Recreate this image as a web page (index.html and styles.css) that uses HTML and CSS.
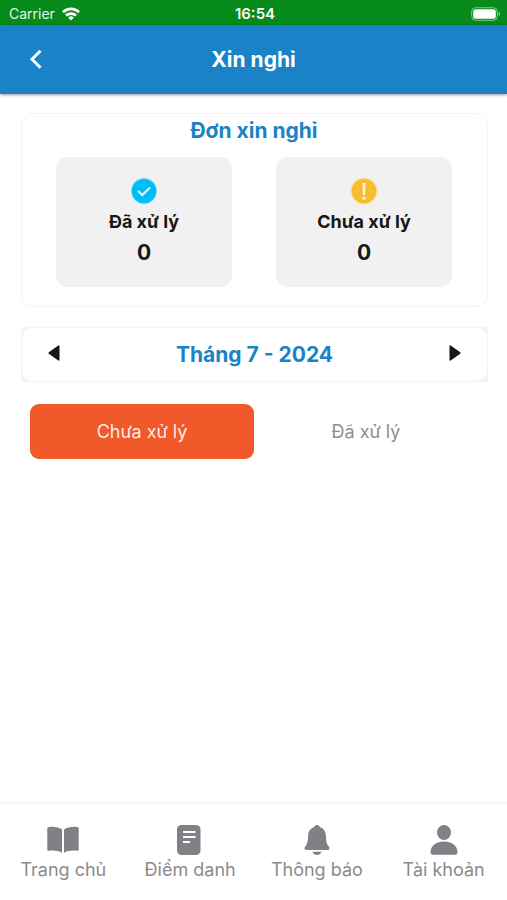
FILE: index.html
```html
<!DOCTYPE html>
<html lang="vi">
<head>
<meta charset="utf-8">
<meta name="viewport" content="width=device-width, initial-scale=1">
<title>Xin nghỉ</title>
<link rel="stylesheet" href="styles.css">
</head>
<body>
<div class="status">
  <div class="carrier">
    <span>Carrier</span>
    <svg width="18" height="14" viewBox="0 0 18 14" fill="none" stroke="#fff" stroke-width="2.6" aria-hidden="true">
      <path d="M1 5.200a11.400 11.400 0 0 1 16 0"/>
      <path d="M4 8.600a7.200 7.200 0 0 1 10 0"/>
      <path d="M9 13.600 6.200 10.700a4 4 0 0 1 5.600 0z" fill="#fff" stroke="none"/>
    </svg>
  </div>
  <time class="clock">16:54</time>
  <svg class="battery" width="30" height="14" viewBox="0 0 30 14" aria-hidden="true">
    <rect x=".7" y=".7" width="25.6" height="12.6" rx="4" fill="none" stroke="#fff" stroke-opacity=".5"/>
    <rect x="2.200" y="2.200" width="22.600" height="9.600" rx="2.500" fill="#fff"/>
    <path d="M27.600 4.800c2 .7 2 3.700 0 4.400z" fill="#fff" fill-opacity=".5"/>
  </svg>
</div>
<header class="header">
  <button class="back" type="button" aria-label="Quay lại">
    <svg width="14" height="20" viewBox="0 0 14 20" fill="none" stroke="#fff" stroke-width="3"><path d="M11.500 .8 3 9.300l8.500 8.500"/></svg>
  </button>
  <h1 class="title">Xin nghỉ</h1>
</header>
<main class="content">
  <section class="summary">
    <h2 class="heading">Đơn xin nghỉ</h2>
    <div class="stats">
      <div class="stat">
        <svg width="28" height="28" viewBox="0 0 28 28" aria-hidden="true">
          <circle cx="14" cy="14" r="13.500" fill="#b9eafa"/><circle cx="14" cy="14" r="12.300" fill="#03bdf6"/>
          <path d="m8 14 4.300 4 7.700-7.500" fill="none" stroke="#e4faff" stroke-width="2"/>
        </svg>
        <span class="stat-label">Đã xử lý</span>
        <span class="stat-value">0</span>
      </div>
      <div class="stat">
        <svg width="28" height="28" viewBox="0 0 28 28" aria-hidden="true">
          <circle cx="14" cy="14" r="13.500" fill="#fbe3a0"/><circle cx="14" cy="14" r="12.300" fill="#f5bd2f"/>
          <path d="M12.400 6h3.200l-.6 12h-2z" fill="#fff5d8"/><circle cx="14" cy="21.200" r="1.700" fill="#fff5d8"/>
        </svg>
        <span class="stat-label">Chưa xử lý</span>
        <span class="stat-value">0</span>
      </div>
    </div>
  </section>
  <div class="month-frame">
    <div class="month">
      <button class="arrow" type="button" aria-label="Tháng trước">
        <svg width="12" height="16" viewBox="0 0 12 16"><path d="M10.300.4Q11.500-.2 11.500 1v14q0 1.200-1.200.6L.8 8.800q-.8-.8 0-1.600z" fill="#171717"/></svg>
      </button>
      <span class="heading">Tháng 7 - 2024</span>
      <button class="arrow" type="button" aria-label="Tháng sau">
        <svg width="12" height="16" viewBox="0 0 12 16"><path d="M1.700.4Q.5-.2.5 1v14q0 1.200 1.200.6l9.500-6.800q.8-.8 0-1.600z" fill="#171717"/></svg>
      </button>
    </div>
  </div>
  <div class="tabs">
    <button class="tab tab-active" type="button" aria-pressed="true">Chưa xử lý</button>
    <button class="tab" type="button" aria-pressed="false">Đã xử lý</button>
  </div>
</main>
<nav class="nav">
  <a class="nav-item" href="#home">
    <svg width="32" height="32" viewBox="0 0 32 32" fill="currentColor" aria-hidden="true">
      <path d="M15 5.500C12 3 6 2.300 1.700 3Q.3 3.200.3 4.500v21q0 1.500 1.600 1.300C7 26.200 12 26.700 15 29z"/>
      <path d="M17 5.500C20 3 26 2.300 30.300 3q1.400.2 1.400 1.500v21q0 1.500-1.600 1.300C25 26.200 20 26.700 17 29z"/>
    </svg>
    <span>Trang chủ</span>
  </a>
  <a class="nav-item" href="#attendance">
    <svg width="32" height="32" viewBox="0 0 32 32" aria-hidden="true">
      <rect x="3" y="1" width="23.500" height="30" rx="4.500" fill="currentColor"/>
      <path d="M9 8h12.500M9 13h12.500M9 18h7" stroke="#fff" stroke-width="2.200"/>
    </svg>
    <span>Điểm danh</span>
  </a>
  <a class="nav-item" href="#notifications">
    <svg width="32" height="32" viewBox="0 0 32 32" fill="currentColor" aria-hidden="true">
      <path d="M16 1c-1.700 0-2.800 1-3.100 2.300C9 4.500 7.200 8 7.100 12c-.1 5-.6 7.800-2.600 10.300C2.900 24.200 3.400 26 5.300 26h21.400c1.900 0 2.400-1.800.8-3.700-2-2.500-2.500-5.300-2.600-10.300-.1-4-1.900-7.500-5.800-8.700C18.800 2 17.700 1 16 1z"/>
      <path d="M11.500 27.800h9C19.500 30 18 31 16 31s-3.500-1-4.500-3.200z"/>
    </svg>
    <span>Thông báo</span>
  </a>
  <a class="nav-item" href="#account">
    <svg width="32" height="32" viewBox="0 0 32 32" fill="currentColor" aria-hidden="true">
      <ellipse cx="16" cy="8.500" rx="7" ry="7.500"/>
      <path d="M16 17.500C8 17.500 2.500 22 2.500 28q0 2.700 2.500 2.700h22q2.500 0 2.500-2.700c0-6-5.500-10.500-13.500-10.500z"/>
    </svg>
    <span>Tài khoản</span>
  </a>
</nav>
</body>
</html>
```
FILE: styles.css
```css
* {
  box-sizing: border-box;
}

body {
  margin: 0;
  min-height: 100vh;
  display: flex;
  flex-direction: column;
  background: #fff;
  color: #171717;
  font-family: Inter, "Noto Sans", sans-serif;
}

svg {
  display: block;
}

button {
  border: 0;
  padding: 0;
  background: none;
  color: inherit;
  font: inherit;
}

.status {
  display: grid;
  grid-template-columns: 1fr auto 1fr;
  align-items: center;
  height: 25px;
  padding: 2px 6px 0 9px;
  background: #068a1c;
  color: #fff;
  font-size: 14px;
  line-height: 20px;
}

.carrier {
  display: flex;
  align-items: center;
  gap: 7px;
  color: #e6f5e8;
}

.clock {
  font-size: 15px;
  font-weight: 600;
}

.battery {
  justify-self: end;
}

.header {
  display: grid;
  grid-template-columns: 48px 1fr 48px;
  align-items: center;
  height: 69px;
  padding: 0 12px;
  background: #1a82c6;
  color: #fff;
  box-shadow: 0 1px 3px rgba(0, 0, 0, 0.4);
}

.back {
  display: grid;
  place-items: center;
  height: 48px;
}

.title,
.heading {
  margin: 0;
  font-size: 21px;
  line-height: 28px;
  font-weight: 700;
  text-align: center;
}

.heading {
  color: #1a82c6;
}

.content {
  flex: 1;
  display: flex;
  flex-direction: column;
  padding: 19px 19px 20px 21px;
}

.summary {
  padding: 3px 35px 19px 34px;
  border: 1px solid #f4f4f4;
  border-radius: 12px;
}

.stats {
  display: grid;
  grid-template-columns: 1fr 1fr;
  gap: 44px;
  margin-top: 12px;
}

.stat {
  display: flex;
  flex-direction: column;
  align-items: center;
  padding: 20px 0;
  border-radius: 12px;
  background: #f1f1f1;
  font-weight: 700;
}

.stat-label {
  margin-top: 4px;
  font-size: 18px;
  line-height: 26px;
}

.stat-value {
  margin-top: 4px;
  font-size: 21px;
  line-height: 28px;
}

.month-frame {
  margin-top: 20px;
  background: #f4f4f4;
}

.month {
  display: grid;
  grid-template-columns: 48px 1fr 48px;
  align-items: center;
  height: 55px;
  padding: 0 8px;
  border: 1px solid #f4f4f4;
  border-radius: 12px;
  background: #fff;
}

.arrow {
  display: grid;
  place-items: center;
  height: 48px;
  padding-bottom: 4px;
}

.tabs {
  display: grid;
  grid-template-columns: 1fr 1fr;
  margin: 22px 10px 0 9px;
}

.tab {
  height: 55px;
  border-radius: 9px;
  color: #8e8e8e;
  font-size: 18px;
}

.tab-active {
  background: #f1592a;
  color: #ffece2;
}

.nav {
  display: grid;
  grid-template-columns: repeat(4, 1fr);
  height: 98px;
  padding-top: 20px;
  border-top: 2px solid #f6f6f6;
}

.nav-item {
  display: flex;
  flex-direction: column;
  align-items: center;
  gap: 1px;
  color: #808087;
  font-size: 18px;
  line-height: 26px;
  text-decoration: none;
}

.nav-item span {
  color: #8b8b8b;
}
```
